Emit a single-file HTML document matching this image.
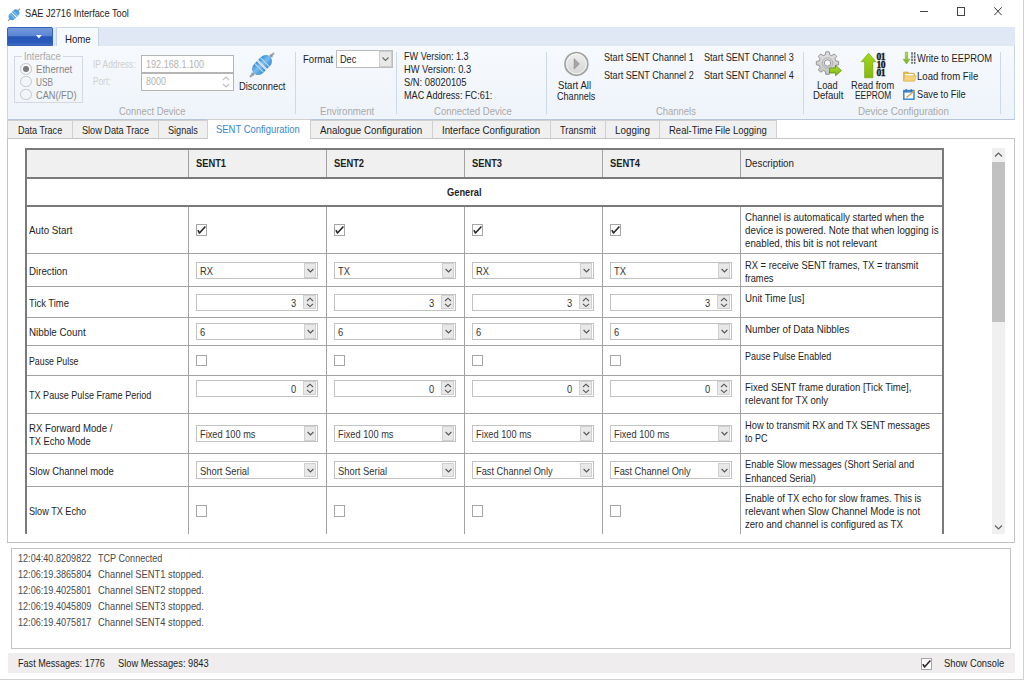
<!DOCTYPE html>
<html><head><meta charset="utf-8">
<style>
*{box-sizing:border-box;margin:0;padding:0}
html,body{width:1024px;height:680px;overflow:hidden;background:#fff}
body{position:relative;font-family:"Liberation Sans",sans-serif;font-size:10.2px;color:#1e1e1e}
.a{position:absolute}
.t{position:absolute;white-space:nowrap;transform-origin:0 0}
.cb{position:absolute;width:11px;height:11.5px;border:1px solid #a6a6a6;background:#fff}
</style></head><body>
<div class="a" style="left:1023px;top:0px;width:1px;height:680px;background:#d0d0d0"></div>
<div class="a" style="left:0px;top:679px;width:1024px;height:1px;background:#d0d0d0"></div>
<svg class="a" style="left:6px;top:7px" width="16" height="16" viewBox="0 0 16 16">
  <g transform="translate(8 7.8) rotate(45)">
    <rect x="-0.6" y="-8.5" width="1.2" height="3" fill="#8d9399"/>
    <rect x="-0.6" y="5.5" width="1.2" height="3" fill="#8d9399"/>
    <path d="M-3.6 -0.5V-2.8Q-3.6 -5.6 0 -6.3Q3.6 -5.6 3.6 -2.8V-0.5Z" fill="#4f9fe0"/>
    <path d="M-3.6 0.5V2.8Q-3.6 5.6 0 6.3Q3.6 5.6 3.6 2.8V0.5Z" fill="#4f9fe0"/>
    <rect x="-3.6" y="-2.4" width="7.2" height="0.7" fill="#a9d3f3"/>
    <rect x="-3.6" y="1.7" width="7.2" height="0.7" fill="#a9d3f3"/>
  </g>
</svg>
<div class="t " style="left:25.30px;top:7.47px;font-size:10.2px;line-height:13px;color:#1e1e1e;transform:scaleX(0.9050);">SAE J2716 Interface Tool</div>
<div class="a" style="left:920px;top:11px;width:8px;height:1px;background:#444"></div>
<div class="a" style="left:956.5px;top:7px;width:8.5px;height:8.5px;border:1px solid #444"></div>
<svg class="a" style="left:994px;top:7px" width="8" height="8.5" viewBox="0 0 8 8.5"><path d="M0.3 0.3L7.7 8.2M7.7 0.3L0.3 8.2" stroke="#333" stroke-width="1"/></svg>
<div class="a" style="left:7px;top:27px;width:1008px;height:20px;background:#dfe8f4;border-bottom:1px solid #c3d4ea"></div>
<div class="a" style="left:7px;top:27px;width:46px;height:19px;border-radius:2px 2px 0 0;background:linear-gradient(#7399dc,#5a86d4 45%,#2656b8 52%,#2a5abb 85%,#3f6cc4);border:1px solid #3462bd"></div>
<svg class="a" style="left:35.8px;top:35px" width="6" height="4"><path d="M0 0H5.8L2.9 3.6z" fill="#fff"/></svg>
<div class="a" style="left:55.5px;top:27.2px;width:43px;height:20px;background:#f6f9fd;border:1px solid #c4d5eb;border-bottom:none;border-radius:2px 2px 0 0"></div>
<div class="t " style="left:64.60px;top:32.57px;font-size:10.2px;line-height:13px;color:#1e1e1e;transform:scaleX(0.9444);">Home</div>
<div class="a" style="left:7px;top:46px;width:1008px;height:74.2px;background:linear-gradient(#f6f9fd,#eff4fa);border:1px solid #c6d6eb;border-top:none;border-bottom-color:#b7c6da"></div>
<div class="a" style="left:295px;top:52px;width:1px;height:62px;background:#ccd9ea"></div>
<div class="a" style="left:396.2px;top:52px;width:1px;height:62px;background:#ccd9ea"></div>
<div class="a" style="left:546px;top:52px;width:1px;height:62px;background:#ccd9ea"></div>
<div class="a" style="left:803.2px;top:52px;width:1px;height:62px;background:#ccd9ea"></div>
<div class="a" style="left:1000.1px;top:52px;width:1px;height:62px;background:#ccd9ea"></div>
<div class="t " style="left:119.20px;top:104.87px;font-size:10.2px;line-height:13px;color:#a9a9a9;transform:scaleX(0.9236);">Connect Device</div>
<div class="t " style="left:320.30px;top:104.87px;font-size:10.2px;line-height:13px;color:#a9a9a9;transform:scaleX(0.9483);">Environment</div>
<div class="t " style="left:434.00px;top:104.87px;font-size:10.2px;line-height:13px;color:#a9a9a9;transform:scaleX(0.9359);">Connected Device</div>
<div class="t " style="left:656.25px;top:104.87px;font-size:10.2px;line-height:13px;color:#a9a9a9;transform:scaleX(0.9282);">Channels</div>
<div class="t " style="left:857.80px;top:104.87px;font-size:10.2px;line-height:13px;color:#a9a9a9;transform:scaleX(0.9611);">Device Configuration</div>
<div class="a" style="left:14.2px;top:55.5px;width:69.2px;height:47px;border:1px solid #d5d9df"></div>
<div class="a" style="left:22px;top:52px;width:41px;height:6px;background:#f5f8fc"></div>
<div class="t " style="left:24.00px;top:50.07px;font-size:10.2px;line-height:13px;color:#aeaaa6;transform:scaleX(0.9260);">Interface</div>
<div class="a" style="left:20.4px;top:63.4px;width:11.2px;height:11.2px;border-radius:50%;border:1px solid #c6c6c6;background:#f3f5f8"></div>
<div class="a" style="left:22.9px;top:65.9px;width:6.2px;height:6.2px;border-radius:50%;background:#7b7b7b"></div>
<div class="t " style="left:35.60px;top:63.07px;font-size:10.2px;line-height:13px;color:#868686;transform:scaleX(0.9402);">Ethernet</div>
<div class="a" style="left:20.4px;top:76.2px;width:11.2px;height:11.2px;border-radius:50%;border:1px solid #c6c6c6;background:#f3f5f8"></div>
<div class="t " style="left:35.60px;top:75.87px;font-size:10.2px;line-height:13px;color:#868686;transform:scaleX(0.8106);">USB</div>
<div class="a" style="left:20.4px;top:89.0px;width:11.2px;height:11.2px;border-radius:50%;border:1px solid #c6c6c6;background:#f3f5f8"></div>
<div class="t " style="left:35.60px;top:88.67px;font-size:10.2px;line-height:13px;color:#868686;transform:scaleX(0.9049);">CAN(/FD)</div>
<div class="t " style="left:92.50px;top:58.37px;font-size:10.2px;line-height:13px;color:#cfcfcf;transform:scaleX(0.8176);">IP Address:</div>
<div class="t " style="left:92.50px;top:75.37px;font-size:10.2px;line-height:13px;color:#cfcfcf;transform:scaleX(0.8124);">Port:</div>
<div class="a" style="left:141px;top:55px;width:93px;height:18px;border:1px solid #b5b5b5;background:#fff"></div>
<div class="a" style="left:141px;top:73px;width:93px;height:17.5px;border:1px solid #b5b5b5;background:#fff"></div>
<div class="t " style="left:145.50px;top:58.37px;font-size:10.2px;line-height:13px;color:#b3b3b3;transform:scaleX(0.8930);">192.168.1.100</div>
<div class="t " style="left:145.50px;top:75.37px;font-size:10.2px;line-height:13px;color:#b3b3b3;transform:scaleX(0.8813);">8000</div>
<svg class="a" style="left:221px;top:75px" width="10" height="14" viewBox="0 0 10 14"><path d="M2 5L5 2L8 5M2 9L5 12L8 9" fill="none" stroke="#c0c0c0" stroke-width="1.1"/></svg>
<svg class="a" style="left:246px;top:48.6px" width="32" height="32" viewBox="0 0 32 32">
  <defs><linearGradient id="bl" x1="0" y1="0" x2="1" y2="0"><stop offset="0" stop-color="#3a8fd6"/><stop offset="0.45" stop-color="#78bdf0"/><stop offset="1" stop-color="#3b8dd4"/></linearGradient></defs>
  <g transform="translate(16 16) rotate(45)">
    <rect x="-1.1" y="-17" width="2.2" height="6" fill="#a3a8ad"/>
    <rect x="-1.1" y="11" width="2.2" height="6" fill="#a3a8ad"/>
    <path d="M-6.3 -1V-4.5Q-6.3 -8.5 -3.2 -10.8Q0 -12.6 3.2 -10.8Q6.3 -8.5 6.3 -4.5V-1Z" fill="url(#bl)"/>
    <path d="M-6.3 1V4.5Q-6.3 8.5 -3.2 10.8Q0 12.6 3.2 10.8Q6.3 8.5 6.3 4.5V1Z" fill="url(#bl)"/>
    <rect x="-6.3" y="-4.6" width="12.6" height="1" fill="#b9dcf6"/>
    <rect x="-6.3" y="3.6" width="12.6" height="1" fill="#b9dcf6"/>
    <rect x="-6.5" y="-1" width="13" height="2" fill="#c9d0d6" opacity="0.7"/><path d="M-2 -12.3L-1.1 -14H1.1L2 -12.3ZM-2 12.3L-1.1 14H1.1L2 12.3Z" fill="#8d9399"/>
  </g>
</svg>
<div class="t " style="left:239.30px;top:79.87px;font-size:10.2px;line-height:13px;color:#1e1e1e;transform:scaleX(0.9215);">Disconnect</div>
<div class="t " style="left:303.00px;top:52.87px;font-size:10.2px;line-height:13px;color:#1e1e1e;transform:scaleX(0.9380);">Format</div>
<div class="a" style="left:335.5px;top:49.5px;width:57px;height:18px;border:1px solid #bcbcbc;background:#fff"></div>
<div class="a" style="left:378.5px;top:50.5px;width:13px;height:16px;border:1px solid #cdcdcd;background:#e8e8e8"></div>
<svg class="a" style="left:379.5px;top:51.5px" width="11" height="14" viewBox="0 0 11 14"><path d="M2.5 5.5L5.5 8.5L8.5 5.5" fill="none" stroke="#666" stroke-width="1.1"/></svg>
<div class="t " style="left:339.75px;top:52.87px;font-size:10.2px;line-height:13px;color:#1e1e1e;transform:scaleX(0.8960);">Dec</div>
<div class="t " style="left:404.00px;top:50.37px;font-size:10.2px;line-height:13px;color:#1e1e1e;transform:scaleX(0.8916);">FW Version: 1.3</div>
<div class="t " style="left:404.00px;top:63.37px;font-size:10.2px;line-height:13px;color:#1e1e1e;transform:scaleX(0.9119);">HW Version: 0.3</div>
<div class="t " style="left:404.00px;top:76.37px;font-size:10.2px;line-height:13px;color:#1e1e1e;transform:scaleX(0.9199);">S/N: 08020105</div>
<div class="t " style="left:404.00px;top:89.37px;font-size:10.2px;line-height:13px;color:#1e1e1e;transform:scaleX(0.8973);">MAC Address: FC:61:</div>
<svg class="a" style="left:563px;top:51.3px" width="26" height="26" viewBox="0 0 26 26">
  <defs><linearGradient id="gy" x1="0" y1="0" x2="0" y2="1"><stop offset="0" stop-color="#efefef"/><stop offset="1" stop-color="#d4d4d4"/></linearGradient></defs>
  <circle cx="13.4" cy="12.9" r="11.4" fill="url(#gy)" stroke="#a3a3a3" stroke-width="1.7"/>
  <circle cx="13.4" cy="12.9" r="9.9" fill="none" stroke="#f7f7f7" stroke-width="0.9"/>
  <path d="M11.2 7.8L16.4 12.9L11.2 18Z" fill="#a6a6a6" stroke="#8a8a8a" stroke-width="0.7" stroke-linejoin="round"/>
</svg>
<div class="t " style="left:558.45px;top:79.47px;font-size:10.2px;line-height:13px;color:#1e1e1e;transform:scaleX(0.9417);">Start All</div>
<div class="t " style="left:556.60px;top:89.67px;font-size:10.2px;line-height:13px;color:#1e1e1e;transform:scaleX(0.8911);">Channels</div>
<div class="t " style="left:604.40px;top:51.07px;font-size:10.2px;line-height:13px;color:#1e1e1e;transform:scaleX(0.8914);">Start SENT Channel 1</div>
<div class="t " style="left:604.40px;top:68.87px;font-size:10.2px;line-height:13px;color:#1e1e1e;transform:scaleX(0.8914);">Start SENT Channel 2</div>
<div class="t " style="left:704.00px;top:51.07px;font-size:10.2px;line-height:13px;color:#1e1e1e;transform:scaleX(0.8914);">Start SENT Channel 3</div>
<div class="t " style="left:704.00px;top:68.87px;font-size:10.2px;line-height:13px;color:#1e1e1e;transform:scaleX(0.8914);">Start SENT Channel 4</div>
<svg class="a" style="left:815px;top:51px" width="28" height="27" viewBox="0 0 28 27">
  <defs><linearGradient id="gr" x1="0" y1="0" x2="0" y2="1"><stop offset="0" stop-color="#e2e2e2"/><stop offset="1" stop-color="#c4c4c4"/></linearGradient>
  <linearGradient id="gn" x1="0" y1="0" x2="0" y2="1"><stop offset="0" stop-color="#b5e03a"/><stop offset="1" stop-color="#78b40e"/></linearGradient></defs>
  <g transform="translate(12.5 12)">
    <path d="M-1.8,-11 L1.8,-11 L2.4,-7.8 L4.6,-6.9 L7.3,-8.7 L9.8,-6.2 L8,-3.5 L8.9,-1.3 L12,-0.7 L12,2.9 L8.9,3.5 L8,5.7 L9.8,8.4 L7.3,10.9 L4.6,9.1 L2.4,10 L1.8,13.2 L-1.8,13.2 L-2.4,10 L-4.6,9.1 L-7.3,10.9 L-9.8,8.4 L-8,5.7 L-8.9,3.5 L-12,2.9 L-12,-0.7 L-8.9,-1.3 L-8,-3.5 L-9.8,-6.2 L-7.3,-8.7 L-4.6,-6.9 L-2.4,-7.8Z" transform="scale(0.93) translate(0 -1)" fill="url(#gr)" stroke="#8e8e8e" stroke-width="1"/>
    <circle cx="0" cy="0" r="5.2" fill="none" stroke="#a8a8a8" stroke-width="0.8"/><circle cx="0" cy="0" r="3.2" fill="#f4f6fa" stroke="#8e8e8e" stroke-width="0.9"/>
  </g>
  <path d="M14.5 17H20.5V14.3L26.5 19.5L20.5 24.8V22H14.5Z" fill="url(#gn)" stroke="#4f8a12" stroke-width="0.7"/>
</svg>
<div class="t " style="left:817.35px;top:79.47px;font-size:10.2px;line-height:13px;color:#1e1e1e;transform:scaleX(0.9121);">Load</div>
<div class="t " style="left:813.30px;top:89.37px;font-size:10.2px;line-height:13px;color:#1e1e1e;transform:scaleX(0.9408);">Default</div>
<svg class="a" style="left:860px;top:52px" width="28" height="27" viewBox="0 0 28 27">
  <defs><linearGradient id="gn2" x1="0" y1="0" x2="0" y2="1"><stop offset="0" stop-color="#a4d81c"/><stop offset="1" stop-color="#86b80c"/></linearGradient></defs>
  <path d="M8.6 1.2L16 9.7H12.9V25.8H4.6V9.7H1.2Z" fill="url(#gn2)" stroke="#6f9d14" stroke-width="0.6"/>
  <text x="16.6" y="8.3" font-family="Liberation Serif" font-weight="bold" font-size="9.6" fill="#111" stroke="#111" stroke-width="0.35" letter-spacing="-0.7">01</text>
  <text x="16.6" y="16" font-family="Liberation Serif" font-weight="bold" font-size="9.6" fill="#111" stroke="#111" stroke-width="0.35" letter-spacing="-0.7">10</text>
  <text x="16.6" y="23.7" font-family="Liberation Serif" font-weight="bold" font-size="9.6" fill="#111" stroke="#111" stroke-width="0.35" letter-spacing="-0.7">01</text>
</svg>
<div class="t " style="left:850.80px;top:79.47px;font-size:10.2px;line-height:13px;color:#1e1e1e;transform:scaleX(0.9073);">Read from</div>
<div class="t " style="left:854.80px;top:89.37px;font-size:10.2px;line-height:13px;color:#1e1e1e;transform:scaleX(0.8189);">EEPROM</div>
<svg class="a" style="left:902px;top:51px" width="15" height="14" viewBox="0 0 15 14">
  <defs><linearGradient id="wg" x1="0" y1="0" x2="0" y2="1"><stop offset="0" stop-color="#b5d84a"/><stop offset="1" stop-color="#6cb52a"/></linearGradient></defs>
  <path d="M3.3 1H5.7V8.2H8L4.5 13L1 8.2H3.3Z" fill="url(#wg)" stroke="#6a9e26" stroke-width="0.4"/>
  <rect x="9.2" y="1.2" width="1.6" height="11.6" fill="#666"/><rect x="11.9" y="1.2" width="1.6" height="11.6" fill="#666"/>
  <rect x="9" y="3.6" width="5" height="0.9" fill="#e8ecf2"/><rect x="9" y="6.8" width="5" height="0.9" fill="#e8ecf2"/><rect x="9" y="10" width="5" height="0.9" fill="#e8ecf2"/>
</svg>
<div class="t " style="left:917.00px;top:52.37px;font-size:10.2px;line-height:13px;color:#1e1e1e;transform:scaleX(0.9147);">Write to EEPROM</div>
<svg class="a" style="left:902.5px;top:70.5px" width="14" height="11" viewBox="0 0 14 11">
  <path d="M0.5 1H5L6.3 2.3H11.5V10H0.5Z" fill="#e9b94f" stroke="#d9a33a" stroke-width="0.6"/>
  <rect x="2" y="3" width="8.5" height="5" fill="#fff"/>
  <path d="M1.8 4.8H13.2L11.8 10H0.5Z" fill="#f6d27a" stroke="#dcae45" stroke-width="0.6"/>
</svg>
<div class="t " style="left:917.00px;top:70.37px;font-size:10.2px;line-height:13px;color:#1e1e1e;transform:scaleX(0.9417);">Load from File</div>
<svg class="a" style="left:902.5px;top:88.5px" width="13" height="11" viewBox="0 0 13 11">
  <rect x="0.8" y="1.6" width="10.2" height="8.6" fill="#fff" stroke="#3a8ad6" stroke-width="1.5"/>
  <rect x="0.8" y="1.6" width="10.2" height="2" fill="#3a8ad6"/>
  <rect x="2.6" y="0.2" width="1.5" height="2.5" fill="#2f6fb5"/><rect x="7.6" y="0.2" width="1.5" height="2.5" fill="#2f6fb5"/>
  <path d="M3.5 8.5L11.8 1.5" stroke="#e9a23b" stroke-width="1.4"/>
</svg>
<div class="t " style="left:917.00px;top:87.67px;font-size:10.2px;line-height:13px;color:#1e1e1e;transform:scaleX(0.9061);">Save to File</div>
<div class="a" style="left:7px;top:120.2px;width:65.6px;height:18.3px;background:#f0f0f0;border:1px solid #d0d0d0;border-bottom:none"></div>
<div class="a" style="left:71.6px;top:120.2px;width:87.30000000000001px;height:18.3px;background:#f0f0f0;border:1px solid #d0d0d0;border-bottom:none"></div>
<div class="a" style="left:157.9px;top:120.2px;width:49.69999999999999px;height:18.3px;background:#f0f0f0;border:1px solid #d0d0d0;border-bottom:none"></div>
<div class="a" style="left:310.3px;top:120.2px;width:122.44999999999999px;height:18.3px;background:#f0f0f0;border:1px solid #d0d0d0;border-bottom:none"></div>
<div class="a" style="left:431.75px;top:120.2px;width:118.75px;height:18.3px;background:#f0f0f0;border:1px solid #d0d0d0;border-bottom:none"></div>
<div class="a" style="left:549.5px;top:120.2px;width:56.5px;height:18.3px;background:#f0f0f0;border:1px solid #d0d0d0;border-bottom:none"></div>
<div class="a" style="left:605px;top:120.2px;width:54.75px;height:18.3px;background:#f0f0f0;border:1px solid #d0d0d0;border-bottom:none"></div>
<div class="a" style="left:658.75px;top:120.2px;width:117.75px;height:18.3px;background:#f0f0f0;border:1px solid #d0d0d0;border-bottom:none"></div>
<div class="a" style="left:7px;top:138px;width:1008px;height:405.3px;border:1px solid #c5c5c5;border-bottom:1.3px solid #c0c0c0;background:#fff"></div>
<div class="a" style="left:206.6px;top:119px;width:104.7px;height:20px;background:#fff;border:1px solid #d0d0d0;border-bottom:none"></div>
<div class="t " style="left:17.70px;top:124.37px;font-size:10.2px;line-height:13px;color:#1e1e1e;transform:scaleX(0.8860);">Data Trace</div>
<div class="t " style="left:81.70px;top:124.37px;font-size:10.2px;line-height:13px;color:#1e1e1e;transform:scaleX(0.8967);">Slow Data Trace</div>
<div class="t " style="left:167.80px;top:124.37px;font-size:10.2px;line-height:13px;color:#1e1e1e;transform:scaleX(0.8937);">Signals</div>
<div class="t " style="left:216.40px;top:123.07px;font-size:10.2px;line-height:13px;color:#3b88d0;transform:scaleX(0.9268);">SENT Configuration</div>
<div class="t " style="left:320.42px;top:124.37px;font-size:10.2px;line-height:13px;color:#1e1e1e;transform:scaleX(0.9586);">Analogue Configuration</div>
<div class="t " style="left:441.93px;top:124.37px;font-size:10.2px;line-height:13px;color:#1e1e1e;transform:scaleX(0.9535);">Interface Configuration</div>
<div class="t " style="left:559.80px;top:124.37px;font-size:10.2px;line-height:13px;color:#1e1e1e;transform:scaleX(0.9137);">Transmit</div>
<div class="t " style="left:614.83px;top:124.37px;font-size:10.2px;line-height:13px;color:#1e1e1e;transform:scaleX(0.9669);">Logging</div>
<div class="t " style="left:668.67px;top:124.37px;font-size:10.2px;line-height:13px;color:#1e1e1e;transform:scaleX(0.9318);">Real-Time File Logging</div>
<div class="a" style="left:0;top:139px;width:990px;height:394.6px;overflow:hidden"><div class="a" style="left:0;top:-139px;width:990px;height:680px">
<div class="a" style="left:25px;top:148px;width:919px;height:30px;background:#f0f0f0"></div>
<div class="t " style="left:196.00px;top:156.67px;font-size:10.2px;line-height:13px;color:#1e1e1e;font-weight:bold;transform:scaleX(0.9150);">SENT1</div>
<div class="t " style="left:334.00px;top:156.67px;font-size:10.2px;line-height:13px;color:#1e1e1e;font-weight:bold;transform:scaleX(0.9150);">SENT2</div>
<div class="t " style="left:472.00px;top:156.67px;font-size:10.2px;line-height:13px;color:#1e1e1e;font-weight:bold;transform:scaleX(0.9150);">SENT3</div>
<div class="t " style="left:610.00px;top:156.67px;font-size:10.2px;line-height:13px;color:#1e1e1e;font-weight:bold;transform:scaleX(0.9150);">SENT4</div>
<div class="t " style="left:744.50px;top:156.67px;font-size:10.2px;line-height:13px;color:#1e1e1e;transform:scaleX(0.9604);">Description</div>
<div class="t " style="left:446.60px;top:185.97px;font-size:10.2px;line-height:13px;color:#1e1e1e;font-weight:bold;transform:scaleX(0.9109);">General</div>
<div class="t " style="left:29.30px;top:224.37px;font-size:10.2px;line-height:13px;color:#1e1e1e;transform:scaleX(0.9568);">Auto Start</div>
<div class="t " style="left:744.60px;top:210.97px;font-size:10.2px;line-height:13px;color:#1e1e1e;transform:scaleX(0.9497);">Channel is automatically started when the</div>
<div class="t " style="left:744.60px;top:224.07px;font-size:10.2px;line-height:13px;color:#1e1e1e;transform:scaleX(0.9601);">device is powered. Note that when logging is</div>
<div class="t " style="left:744.60px;top:237.17px;font-size:10.2px;line-height:13px;color:#1e1e1e;transform:scaleX(0.9588);">enabled, this bit is not relevant</div>
<div class="cb" style="left:196.2px;top:224.2px"><svg width="11" height="11" viewBox="0 0 11 11" style="position:absolute;left:-1px;top:-1px"><path d="M1.9 6.1L3.5 9L9.4 2.5" fill="none" stroke="#2a2a2a" stroke-width="1.6" stroke-linejoin="round"/></svg></div>
<div class="cb" style="left:334.2px;top:224.2px"><svg width="11" height="11" viewBox="0 0 11 11" style="position:absolute;left:-1px;top:-1px"><path d="M1.9 6.1L3.5 9L9.4 2.5" fill="none" stroke="#2a2a2a" stroke-width="1.6" stroke-linejoin="round"/></svg></div>
<div class="cb" style="left:472.2px;top:224.2px"><svg width="11" height="11" viewBox="0 0 11 11" style="position:absolute;left:-1px;top:-1px"><path d="M1.9 6.1L3.5 9L9.4 2.5" fill="none" stroke="#2a2a2a" stroke-width="1.6" stroke-linejoin="round"/></svg></div>
<div class="cb" style="left:610.2px;top:224.2px"><svg width="11" height="11" viewBox="0 0 11 11" style="position:absolute;left:-1px;top:-1px"><path d="M1.9 6.1L3.5 9L9.4 2.5" fill="none" stroke="#2a2a2a" stroke-width="1.6" stroke-linejoin="round"/></svg></div>
<div class="a" style="left:25px;top:253.4px;width:919px;height:1px;background:#a3a3a3"></div>
<div class="t " style="left:29.30px;top:264.87px;font-size:10.2px;line-height:13px;color:#1e1e1e;transform:scaleX(0.9565);">Direction</div>
<div class="t " style="left:744.60px;top:258.97px;font-size:10.2px;line-height:13px;color:#1e1e1e;transform:scaleX(0.9182);">RX = receive SENT frames, TX = transmit</div>
<div class="t " style="left:744.60px;top:272.07px;font-size:10.2px;line-height:13px;color:#1e1e1e;transform:scaleX(0.9143);">frames</div>
<div class="a" style="left:196px;top:261.5px;width:122px;height:17.7px;border:1px solid #c3c3c3;background:#fff"></div>
<div class="a" style="left:304px;top:262.9px;width:12.2px;height:14.8px;border:1px solid #d0d0d0;background:#e8e8e8"></div>
<svg class="a" style="left:305px;top:263.8px" width="11" height="13" viewBox="0 0 11 13"><path d="M2.6 5L5.5 7.9L8.4 5" fill="none" stroke="#555" stroke-width="1.1"/></svg>
<div class="t " style="left:200.00px;top:264.97px;font-size:10.2px;line-height:13px;color:#333;transform:scaleX(0.9150);">RX</div>
<div class="a" style="left:334px;top:261.5px;width:122px;height:17.7px;border:1px solid #c3c3c3;background:#fff"></div>
<div class="a" style="left:442px;top:262.9px;width:12.2px;height:14.8px;border:1px solid #d0d0d0;background:#e8e8e8"></div>
<svg class="a" style="left:443px;top:263.8px" width="11" height="13" viewBox="0 0 11 13"><path d="M2.6 5L5.5 7.9L8.4 5" fill="none" stroke="#555" stroke-width="1.1"/></svg>
<div class="t " style="left:338.00px;top:264.97px;font-size:10.2px;line-height:13px;color:#333;transform:scaleX(0.9150);">TX</div>
<div class="a" style="left:472px;top:261.5px;width:122px;height:17.7px;border:1px solid #c3c3c3;background:#fff"></div>
<div class="a" style="left:580px;top:262.9px;width:12.2px;height:14.8px;border:1px solid #d0d0d0;background:#e8e8e8"></div>
<svg class="a" style="left:581px;top:263.8px" width="11" height="13" viewBox="0 0 11 13"><path d="M2.6 5L5.5 7.9L8.4 5" fill="none" stroke="#555" stroke-width="1.1"/></svg>
<div class="t " style="left:476.00px;top:264.97px;font-size:10.2px;line-height:13px;color:#333;transform:scaleX(0.9150);">RX</div>
<div class="a" style="left:610px;top:261.5px;width:122px;height:17.7px;border:1px solid #c3c3c3;background:#fff"></div>
<div class="a" style="left:718px;top:262.9px;width:12.2px;height:14.8px;border:1px solid #d0d0d0;background:#e8e8e8"></div>
<svg class="a" style="left:719px;top:263.8px" width="11" height="13" viewBox="0 0 11 13"><path d="M2.6 5L5.5 7.9L8.4 5" fill="none" stroke="#555" stroke-width="1.1"/></svg>
<div class="t " style="left:614.00px;top:264.97px;font-size:10.2px;line-height:13px;color:#333;transform:scaleX(0.9150);">TX</div>
<div class="a" style="left:25px;top:286.4px;width:919px;height:1px;background:#a3a3a3"></div>
<div class="t " style="left:29.30px;top:296.87px;font-size:10.2px;line-height:13px;color:#1e1e1e;transform:scaleX(0.9247);">Tick Time</div>
<div class="t " style="left:744.60px;top:291.97px;font-size:10.2px;line-height:13px;color:#1e1e1e;transform:scaleX(0.9526);">Unit Time [us]</div>
<div class="a" style="left:196px;top:293.5px;width:122px;height:17.5px;border:1px solid #c3c3c3;background:#fff"></div>
<div class="a" style="left:303px;top:295.0px;width:13px;height:14.2px;border:1px solid #d0d0d0;background:#e8e8e8"></div>
<svg class="a" style="left:304px;top:296.0px" width="12" height="13" viewBox="0 0 12 13"><path d="M3 5L6 2.2L9 5M3 7.8L6 10.6L9 7.8" fill="none" stroke="#555" stroke-width="1.1"/></svg>
<div class="t " style="left:291.31px;top:296.77px;font-size:10.2px;line-height:13px;color:#333;transform:scaleX(0.9150);">3</div>
<div class="a" style="left:334px;top:293.5px;width:122px;height:17.5px;border:1px solid #c3c3c3;background:#fff"></div>
<div class="a" style="left:441px;top:295.0px;width:13px;height:14.2px;border:1px solid #d0d0d0;background:#e8e8e8"></div>
<svg class="a" style="left:442px;top:296.0px" width="12" height="13" viewBox="0 0 12 13"><path d="M3 5L6 2.2L9 5M3 7.8L6 10.6L9 7.8" fill="none" stroke="#555" stroke-width="1.1"/></svg>
<div class="t " style="left:429.31px;top:296.77px;font-size:10.2px;line-height:13px;color:#333;transform:scaleX(0.9150);">3</div>
<div class="a" style="left:472px;top:293.5px;width:122px;height:17.5px;border:1px solid #c3c3c3;background:#fff"></div>
<div class="a" style="left:579px;top:295.0px;width:13px;height:14.2px;border:1px solid #d0d0d0;background:#e8e8e8"></div>
<svg class="a" style="left:580px;top:296.0px" width="12" height="13" viewBox="0 0 12 13"><path d="M3 5L6 2.2L9 5M3 7.8L6 10.6L9 7.8" fill="none" stroke="#555" stroke-width="1.1"/></svg>
<div class="t " style="left:567.31px;top:296.77px;font-size:10.2px;line-height:13px;color:#333;transform:scaleX(0.9150);">3</div>
<div class="a" style="left:610px;top:293.5px;width:122px;height:17.5px;border:1px solid #c3c3c3;background:#fff"></div>
<div class="a" style="left:717px;top:295.0px;width:13px;height:14.2px;border:1px solid #d0d0d0;background:#e8e8e8"></div>
<svg class="a" style="left:718px;top:296.0px" width="12" height="13" viewBox="0 0 12 13"><path d="M3 5L6 2.2L9 5M3 7.8L6 10.6L9 7.8" fill="none" stroke="#555" stroke-width="1.1"/></svg>
<div class="t " style="left:705.31px;top:296.77px;font-size:10.2px;line-height:13px;color:#333;transform:scaleX(0.9150);">3</div>
<div class="a" style="left:25px;top:317.4px;width:919px;height:1px;background:#a3a3a3"></div>
<div class="t " style="left:29.30px;top:326.12px;font-size:10.2px;line-height:13px;color:#1e1e1e;transform:scaleX(0.9624);">Nibble Count</div>
<div class="t " style="left:744.60px;top:322.97px;font-size:10.2px;line-height:13px;color:#1e1e1e;transform:scaleX(0.9592);">Number of Data Nibbles</div>
<div class="a" style="left:196px;top:322.75px;width:122px;height:17.7px;border:1px solid #c3c3c3;background:#fff"></div>
<div class="a" style="left:304px;top:324.15px;width:12.2px;height:14.8px;border:1px solid #d0d0d0;background:#e8e8e8"></div>
<svg class="a" style="left:305px;top:325.05px" width="11" height="13" viewBox="0 0 11 13"><path d="M2.6 5L5.5 7.9L8.4 5" fill="none" stroke="#555" stroke-width="1.1"/></svg>
<div class="t " style="left:200.00px;top:326.22px;font-size:10.2px;line-height:13px;color:#333;transform:scaleX(0.9150);">6</div>
<div class="a" style="left:334px;top:322.75px;width:122px;height:17.7px;border:1px solid #c3c3c3;background:#fff"></div>
<div class="a" style="left:442px;top:324.15px;width:12.2px;height:14.8px;border:1px solid #d0d0d0;background:#e8e8e8"></div>
<svg class="a" style="left:443px;top:325.05px" width="11" height="13" viewBox="0 0 11 13"><path d="M2.6 5L5.5 7.9L8.4 5" fill="none" stroke="#555" stroke-width="1.1"/></svg>
<div class="t " style="left:338.00px;top:326.22px;font-size:10.2px;line-height:13px;color:#333;transform:scaleX(0.9150);">6</div>
<div class="a" style="left:472px;top:322.75px;width:122px;height:17.7px;border:1px solid #c3c3c3;background:#fff"></div>
<div class="a" style="left:580px;top:324.15px;width:12.2px;height:14.8px;border:1px solid #d0d0d0;background:#e8e8e8"></div>
<svg class="a" style="left:581px;top:325.05px" width="11" height="13" viewBox="0 0 11 13"><path d="M2.6 5L5.5 7.9L8.4 5" fill="none" stroke="#555" stroke-width="1.1"/></svg>
<div class="t " style="left:476.00px;top:326.22px;font-size:10.2px;line-height:13px;color:#333;transform:scaleX(0.9150);">6</div>
<div class="a" style="left:610px;top:322.75px;width:122px;height:17.7px;border:1px solid #c3c3c3;background:#fff"></div>
<div class="a" style="left:718px;top:324.15px;width:12.2px;height:14.8px;border:1px solid #d0d0d0;background:#e8e8e8"></div>
<svg class="a" style="left:719px;top:325.05px" width="11" height="13" viewBox="0 0 11 13"><path d="M2.6 5L5.5 7.9L8.4 5" fill="none" stroke="#555" stroke-width="1.1"/></svg>
<div class="t " style="left:614.00px;top:326.22px;font-size:10.2px;line-height:13px;color:#333;transform:scaleX(0.9150);">6</div>
<div class="a" style="left:25px;top:344.9px;width:919px;height:1px;background:#a3a3a3"></div>
<div class="t " style="left:29.30px;top:355.12px;font-size:10.2px;line-height:13px;color:#1e1e1e;transform:scaleX(0.8643);">Pause Pulse</div>
<div class="t " style="left:744.60px;top:350.47px;font-size:10.2px;line-height:13px;color:#1e1e1e;transform:scaleX(0.8847);">Pause Pulse Enabled</div>
<div class="cb" style="left:196.2px;top:354.95px"></div>
<div class="cb" style="left:334.2px;top:354.95px"></div>
<div class="cb" style="left:472.2px;top:354.95px"></div>
<div class="cb" style="left:610.2px;top:354.95px"></div>
<div class="a" style="left:25px;top:375.4px;width:919px;height:1px;background:#a3a3a3"></div>
<div class="t " style="left:29.30px;top:389.37px;font-size:10.2px;line-height:13px;color:#1e1e1e;transform:scaleX(0.8892);">TX Pause Pulse Frame Period</div>
<div class="t " style="left:744.60px;top:380.97px;font-size:10.2px;line-height:13px;color:#1e1e1e;transform:scaleX(0.9354);">Fixed SENT frame duration [Tick Time],</div>
<div class="t " style="left:744.60px;top:394.07px;font-size:10.2px;line-height:13px;color:#1e1e1e;transform:scaleX(0.9428);">relevant for TX only</div>
<div class="a" style="left:196px;top:379.5px;width:122px;height:17.5px;border:1px solid #c3c3c3;background:#fff"></div>
<div class="a" style="left:303px;top:381.0px;width:13px;height:14.2px;border:1px solid #d0d0d0;background:#e8e8e8"></div>
<svg class="a" style="left:304px;top:382.0px" width="12" height="13" viewBox="0 0 12 13"><path d="M3 5L6 2.2L9 5M3 7.8L6 10.6L9 7.8" fill="none" stroke="#555" stroke-width="1.1"/></svg>
<div class="t " style="left:291.31px;top:382.77px;font-size:10.2px;line-height:13px;color:#333;transform:scaleX(0.9150);">0</div>
<div class="a" style="left:334px;top:379.5px;width:122px;height:17.5px;border:1px solid #c3c3c3;background:#fff"></div>
<div class="a" style="left:441px;top:381.0px;width:13px;height:14.2px;border:1px solid #d0d0d0;background:#e8e8e8"></div>
<svg class="a" style="left:442px;top:382.0px" width="12" height="13" viewBox="0 0 12 13"><path d="M3 5L6 2.2L9 5M3 7.8L6 10.6L9 7.8" fill="none" stroke="#555" stroke-width="1.1"/></svg>
<div class="t " style="left:429.31px;top:382.77px;font-size:10.2px;line-height:13px;color:#333;transform:scaleX(0.9150);">0</div>
<div class="a" style="left:472px;top:379.5px;width:122px;height:17.5px;border:1px solid #c3c3c3;background:#fff"></div>
<div class="a" style="left:579px;top:381.0px;width:13px;height:14.2px;border:1px solid #d0d0d0;background:#e8e8e8"></div>
<svg class="a" style="left:580px;top:382.0px" width="12" height="13" viewBox="0 0 12 13"><path d="M3 5L6 2.2L9 5M3 7.8L6 10.6L9 7.8" fill="none" stroke="#555" stroke-width="1.1"/></svg>
<div class="t " style="left:567.31px;top:382.77px;font-size:10.2px;line-height:13px;color:#333;transform:scaleX(0.9150);">0</div>
<div class="a" style="left:610px;top:379.5px;width:122px;height:17.5px;border:1px solid #c3c3c3;background:#fff"></div>
<div class="a" style="left:717px;top:381.0px;width:13px;height:14.2px;border:1px solid #d0d0d0;background:#e8e8e8"></div>
<svg class="a" style="left:718px;top:382.0px" width="12" height="13" viewBox="0 0 12 13"><path d="M3 5L6 2.2L9 5M3 7.8L6 10.6L9 7.8" fill="none" stroke="#555" stroke-width="1.1"/></svg>
<div class="t " style="left:705.31px;top:382.77px;font-size:10.2px;line-height:13px;color:#333;transform:scaleX(0.9150);">0</div>
<div class="a" style="left:25px;top:413.4px;width:919px;height:1px;background:#a3a3a3"></div>
<div class="t " style="left:29.30px;top:422.37px;font-size:10.2px;line-height:13px;color:#1e1e1e;transform:scaleX(0.9442);">RX Forward Mode /</div>
<div class="t " style="left:29.30px;top:435.37px;font-size:10.2px;line-height:13px;color:#1e1e1e;transform:scaleX(0.9153);">TX Echo Mode</div>
<div class="t " style="left:744.60px;top:418.97px;font-size:10.2px;line-height:13px;color:#1e1e1e;transform:scaleX(0.9143);">How to transmit RX and TX SENT messages</div>
<div class="t " style="left:744.60px;top:432.07px;font-size:10.2px;line-height:13px;color:#1e1e1e;transform:scaleX(0.8820);">to PC</div>
<div class="a" style="left:196px;top:424.75px;width:122px;height:17.7px;border:1px solid #c3c3c3;background:#fff"></div>
<div class="a" style="left:304px;top:426.15px;width:12.2px;height:14.8px;border:1px solid #d0d0d0;background:#e8e8e8"></div>
<svg class="a" style="left:305px;top:427.05px" width="11" height="13" viewBox="0 0 11 13"><path d="M2.6 5L5.5 7.9L8.4 5" fill="none" stroke="#555" stroke-width="1.1"/></svg>
<div class="t " style="left:200.00px;top:428.22px;font-size:10.2px;line-height:13px;color:#333;transform:scaleX(0.9066);">Fixed 100 ms</div>
<div class="a" style="left:334px;top:424.75px;width:122px;height:17.7px;border:1px solid #c3c3c3;background:#fff"></div>
<div class="a" style="left:442px;top:426.15px;width:12.2px;height:14.8px;border:1px solid #d0d0d0;background:#e8e8e8"></div>
<svg class="a" style="left:443px;top:427.05px" width="11" height="13" viewBox="0 0 11 13"><path d="M2.6 5L5.5 7.9L8.4 5" fill="none" stroke="#555" stroke-width="1.1"/></svg>
<div class="t " style="left:338.00px;top:428.22px;font-size:10.2px;line-height:13px;color:#333;transform:scaleX(0.9066);">Fixed 100 ms</div>
<div class="a" style="left:472px;top:424.75px;width:122px;height:17.7px;border:1px solid #c3c3c3;background:#fff"></div>
<div class="a" style="left:580px;top:426.15px;width:12.2px;height:14.8px;border:1px solid #d0d0d0;background:#e8e8e8"></div>
<svg class="a" style="left:581px;top:427.05px" width="11" height="13" viewBox="0 0 11 13"><path d="M2.6 5L5.5 7.9L8.4 5" fill="none" stroke="#555" stroke-width="1.1"/></svg>
<div class="t " style="left:476.00px;top:428.22px;font-size:10.2px;line-height:13px;color:#333;transform:scaleX(0.9066);">Fixed 100 ms</div>
<div class="a" style="left:610px;top:424.75px;width:122px;height:17.7px;border:1px solid #c3c3c3;background:#fff"></div>
<div class="a" style="left:718px;top:426.15px;width:12.2px;height:14.8px;border:1px solid #d0d0d0;background:#e8e8e8"></div>
<svg class="a" style="left:719px;top:427.05px" width="11" height="13" viewBox="0 0 11 13"><path d="M2.6 5L5.5 7.9L8.4 5" fill="none" stroke="#555" stroke-width="1.1"/></svg>
<div class="t " style="left:614.00px;top:428.22px;font-size:10.2px;line-height:13px;color:#333;transform:scaleX(0.9066);">Fixed 100 ms</div>
<div class="a" style="left:25px;top:452.9px;width:919px;height:1px;background:#a3a3a3"></div>
<div class="t " style="left:29.30px;top:464.62px;font-size:10.2px;line-height:13px;color:#1e1e1e;transform:scaleX(0.9311);">Slow Channel mode</div>
<div class="t " style="left:744.60px;top:458.47px;font-size:10.2px;line-height:13px;color:#1e1e1e;transform:scaleX(0.9132);">Enable Slow messages (Short Serial and</div>
<div class="t " style="left:744.60px;top:471.57px;font-size:10.2px;line-height:13px;color:#1e1e1e;transform:scaleX(0.9061);">Enhanced Serial)</div>
<div class="a" style="left:196px;top:461.25px;width:122px;height:17.7px;border:1px solid #c3c3c3;background:#fff"></div>
<div class="a" style="left:304px;top:462.65px;width:12.2px;height:14.8px;border:1px solid #d0d0d0;background:#e8e8e8"></div>
<svg class="a" style="left:305px;top:463.55px" width="11" height="13" viewBox="0 0 11 13"><path d="M2.6 5L5.5 7.9L8.4 5" fill="none" stroke="#555" stroke-width="1.1"/></svg>
<div class="t " style="left:200.00px;top:464.72px;font-size:10.2px;line-height:13px;color:#333;transform:scaleX(0.9232);">Short Serial</div>
<div class="a" style="left:334px;top:461.25px;width:122px;height:17.7px;border:1px solid #c3c3c3;background:#fff"></div>
<div class="a" style="left:442px;top:462.65px;width:12.2px;height:14.8px;border:1px solid #d0d0d0;background:#e8e8e8"></div>
<svg class="a" style="left:443px;top:463.55px" width="11" height="13" viewBox="0 0 11 13"><path d="M2.6 5L5.5 7.9L8.4 5" fill="none" stroke="#555" stroke-width="1.1"/></svg>
<div class="t " style="left:338.00px;top:464.72px;font-size:10.2px;line-height:13px;color:#333;transform:scaleX(0.9232);">Short Serial</div>
<div class="a" style="left:472px;top:461.25px;width:122px;height:17.7px;border:1px solid #c3c3c3;background:#fff"></div>
<div class="a" style="left:580px;top:462.65px;width:12.2px;height:14.8px;border:1px solid #d0d0d0;background:#e8e8e8"></div>
<svg class="a" style="left:581px;top:463.55px" width="11" height="13" viewBox="0 0 11 13"><path d="M2.6 5L5.5 7.9L8.4 5" fill="none" stroke="#555" stroke-width="1.1"/></svg>
<div class="t " style="left:476.00px;top:464.72px;font-size:10.2px;line-height:13px;color:#333;transform:scaleX(0.9091);">Fast Channel Only</div>
<div class="a" style="left:610px;top:461.25px;width:122px;height:17.7px;border:1px solid #c3c3c3;background:#fff"></div>
<div class="a" style="left:718px;top:462.65px;width:12.2px;height:14.8px;border:1px solid #d0d0d0;background:#e8e8e8"></div>
<svg class="a" style="left:719px;top:463.55px" width="11" height="13" viewBox="0 0 11 13"><path d="M2.6 5L5.5 7.9L8.4 5" fill="none" stroke="#555" stroke-width="1.1"/></svg>
<div class="t " style="left:614.00px;top:464.72px;font-size:10.2px;line-height:13px;color:#333;transform:scaleX(0.9091);">Fast Channel Only</div>
<div class="a" style="left:25px;top:486.4px;width:919px;height:1px;background:#a3a3a3"></div>
<div class="t " style="left:29.30px;top:505.37px;font-size:10.2px;line-height:13px;color:#1e1e1e;transform:scaleX(0.8955);">Slow TX Echo</div>
<div class="t " style="left:744.60px;top:491.97px;font-size:10.2px;line-height:13px;color:#1e1e1e;transform:scaleX(0.9257);">Enable of TX echo for slow frames. This is</div>
<div class="t " style="left:744.60px;top:505.07px;font-size:10.2px;line-height:13px;color:#1e1e1e;transform:scaleX(0.9484);">relevant when Slow Channel Mode is not</div>
<div class="t " style="left:744.60px;top:518.17px;font-size:10.2px;line-height:13px;color:#1e1e1e;transform:scaleX(0.9393);">zero and channel is configured as TX</div>
<div class="cb" style="left:196.2px;top:505.2px"></div>
<div class="cb" style="left:334.2px;top:505.2px"></div>
<div class="cb" style="left:472.2px;top:505.2px"></div>
<div class="cb" style="left:610.2px;top:505.2px"></div>
<div class="a" style="left:188px;top:148px;width:1px;height:30px;background:#a3a3a3"></div>
<div class="a" style="left:188px;top:206px;width:1px;height:334px;background:#a3a3a3"></div>
<div class="a" style="left:326px;top:148px;width:1px;height:30px;background:#a3a3a3"></div>
<div class="a" style="left:326px;top:206px;width:1px;height:334px;background:#a3a3a3"></div>
<div class="a" style="left:464px;top:148px;width:1px;height:30px;background:#a3a3a3"></div>
<div class="a" style="left:464px;top:206px;width:1px;height:334px;background:#a3a3a3"></div>
<div class="a" style="left:602px;top:148px;width:1px;height:30px;background:#a3a3a3"></div>
<div class="a" style="left:602px;top:206px;width:1px;height:334px;background:#a3a3a3"></div>
<div class="a" style="left:740px;top:148px;width:1px;height:30px;background:#a3a3a3"></div>
<div class="a" style="left:740px;top:206px;width:1px;height:334px;background:#a3a3a3"></div>
<div class="a" style="left:25px;top:148px;width:919px;height:1.7px;background:#7a7a7a"></div>
<div class="a" style="left:25px;top:177px;width:919px;height:1.7px;background:#7a7a7a"></div>
<div class="a" style="left:25px;top:205px;width:919px;height:1.7px;background:#7a7a7a"></div>
<div class="a" style="left:25px;top:148px;width:1.8px;height:392px;background:#7a7a7a"></div>
<div class="a" style="left:942.2px;top:148px;width:1.8px;height:392px;background:#7a7a7a"></div>
</div></div>
<div class="a" style="left:992px;top:148px;width:13px;height:386px;background:#f0f0f0"></div>
<div class="a" style="left:992px;top:161.5px;width:13px;height:160px;background:#c1c1c1"></div>
<svg class="a" style="left:994px;top:151px" width="9" height="8" viewBox="0 0 9 8"><path d="M1 5.5L4.5 2L8 5.5" fill="none" stroke="#606060" stroke-width="1.2"/></svg>
<svg class="a" style="left:994px;top:523px" width="9" height="8" viewBox="0 0 9 8"><path d="M1 2.5L4.5 6L8 2.5" fill="none" stroke="#606060" stroke-width="1.2"/></svg>
<div class="a" style="left:11.1px;top:547.5px;width:1000px;height:101px;border:1px solid #c3c3c3;background:#fff"></div>
<div class="t " style="left:17.80px;top:551.97px;font-size:10.2px;line-height:13px;color:#4a4a4a;transform:scaleX(0.8930);">12:04:40.8209822</div>
<div class="t " style="left:98.30px;top:551.97px;font-size:10.2px;line-height:13px;color:#4a4a4a;transform:scaleX(0.8910);">TCP Connected</div>
<div class="t " style="left:17.80px;top:568.37px;font-size:10.2px;line-height:13px;color:#4a4a4a;transform:scaleX(0.8930);">12:06:19.3865804</div>
<div class="t " style="left:98.30px;top:568.37px;font-size:10.2px;line-height:13px;color:#4a4a4a;transform:scaleX(0.9164);">Channel SENT1 stopped.</div>
<div class="t " style="left:17.80px;top:584.37px;font-size:10.2px;line-height:13px;color:#4a4a4a;transform:scaleX(0.8930);">12:06:19.4025801</div>
<div class="t " style="left:98.30px;top:584.37px;font-size:10.2px;line-height:13px;color:#4a4a4a;transform:scaleX(0.9164);">Channel SENT2 stopped.</div>
<div class="t " style="left:17.80px;top:600.37px;font-size:10.2px;line-height:13px;color:#4a4a4a;transform:scaleX(0.8930);">12:06:19.4045809</div>
<div class="t " style="left:98.30px;top:600.37px;font-size:10.2px;line-height:13px;color:#4a4a4a;transform:scaleX(0.9164);">Channel SENT3 stopped.</div>
<div class="t " style="left:17.80px;top:616.47px;font-size:10.2px;line-height:13px;color:#4a4a4a;transform:scaleX(0.8930);">12:06:19.4075817</div>
<div class="t " style="left:98.30px;top:616.47px;font-size:10.2px;line-height:13px;color:#4a4a4a;transform:scaleX(0.9164);">Channel SENT4 stopped.</div>
<div class="a" style="left:7.5px;top:653px;width:1007.5px;height:20px;background:#efeded"></div>
<div class="t " style="left:18.00px;top:657.37px;font-size:10.2px;line-height:13px;color:#1e1e1e;transform:scaleX(0.8921);">Fast Messages: 1776</div>
<div class="t " style="left:118.00px;top:657.37px;font-size:10.2px;line-height:13px;color:#1e1e1e;transform:scaleX(0.9094);">Slow Messages: 9843</div>
<div class="cb" style="left:921px;top:658px"><svg width="11" height="11" viewBox="0 0 11 11" style="position:absolute;left:-1px;top:-1px"><path d="M1.9 6.1L3.5 9L9.4 2.5" fill="none" stroke="#2a2a2a" stroke-width="1.6" stroke-linejoin="round"/></svg></div>
<div class="t " style="left:943.75px;top:657.37px;font-size:10.2px;line-height:13px;color:#1e1e1e;transform:scaleX(0.9161);">Show Console</div>
</body></html>
